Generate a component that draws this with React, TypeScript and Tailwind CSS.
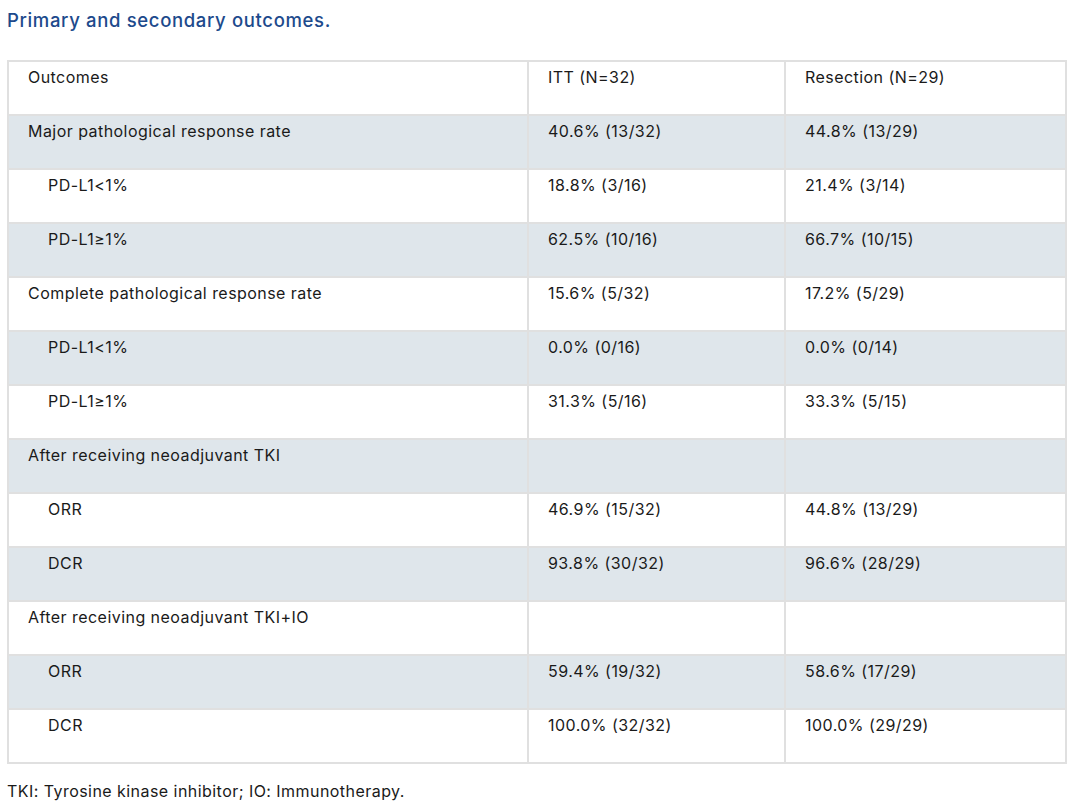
const rows: { label: string; itt: string; res: string; sub?: boolean }[] = [
  { label: 'Major pathological response rate', itt: '40.6% (13/32)', res: '44.8% (13/29)' },
  { label: 'PD-L1<1%', itt: '18.8% (3/16)', res: '21.4% (3/14)', sub: true },
  { label: 'PD-L1≥1%', itt: '62.5% (10/16)', res: '66.7% (10/15)', sub: true },
  { label: 'Complete pathological response rate', itt: '15.6% (5/32)', res: '17.2% (5/29)' },
  { label: 'PD-L1<1%', itt: '0.0% (0/16)', res: '0.0% (0/14)', sub: true },
  { label: 'PD-L1≥1%', itt: '31.3% (5/16)', res: '33.3% (5/15)', sub: true },
  { label: 'After receiving neoadjuvant TKI', itt: '', res: '' },
  { label: 'ORR', itt: '46.9% (15/32)', res: '44.8% (13/29)', sub: true },
  { label: 'DCR', itt: '93.8% (30/32)', res: '96.6% (28/29)', sub: true },
  { label: 'After receiving neoadjuvant TKI+IO', itt: '', res: '' },
  { label: 'ORR', itt: '59.4% (19/32)', res: '58.6% (17/29)', sub: true },
  { label: 'DCR', itt: '100.0% (32/32)', res: '100.0% (29/29)', sub: true },
];

export default function App() {
  return (
    <div className="min-h-screen bg-white px-[7px] pt-[8px] font-['Inter',sans-serif] text-[16px] tracking-[0.45px] text-[#1a1a1a]">
      <h2 className="text-[18.5px] font-medium leading-[24px] tracking-[0.65px] text-[#1d4a8c]">
        Primary and secondary outcomes.
      </h2>

      <table className="mt-[28px] w-[1058px] table-fixed border-collapse">
        <colgroup>
          <col className="w-[520px]" />
          <col className="w-[257px]" />
          <col className="w-[281px]" />
        </colgroup>
        <thead>
          <tr className="h-[54px] bg-white">
            <th className="border-2 border-[#e0e0e0] pl-[19px] pt-[4px] align-top text-left font-normal leading-[22px]">
              Outcomes
            </th>
            <th className="border-2 border-[#e0e0e0] pl-[19px] pt-[4px] align-top text-left font-normal leading-[22px]">
              ITT (N=32)
            </th>
            <th className="border-2 border-[#e0e0e0] pl-[19px] pt-[4px] align-top text-left font-normal leading-[22px]">
              Resection (N=29)
            </th>
          </tr>
        </thead>
        <tbody>
          {rows.map((r, i) => (
            <tr key={i} className={`h-[54px] ${i % 2 === 0 ? 'bg-[#dfe6eb]' : 'bg-white'}`}>
              <td
                className={`border-2 border-[#e0e0e0] pt-[4px] align-top leading-[22px] ${
                  r.sub ? 'pl-[39px]' : 'pl-[19px]'
                }`}
              >
                {r.label}
              </td>
              <td className="border-2 border-[#e0e0e0] pl-[19px] pt-[4px] align-top leading-[22px]">{r.itt}</td>
              <td className="border-2 border-[#e0e0e0] pl-[19px] pt-[4px] align-top leading-[22px]">{r.res}</td>
            </tr>
          ))}
        </tbody>
      </table>

      <p className="mt-[16px] leading-[22px]">TKI: Tyrosine kinase inhibitor; IO: Immunotherapy.</p>
    </div>
  );
}
